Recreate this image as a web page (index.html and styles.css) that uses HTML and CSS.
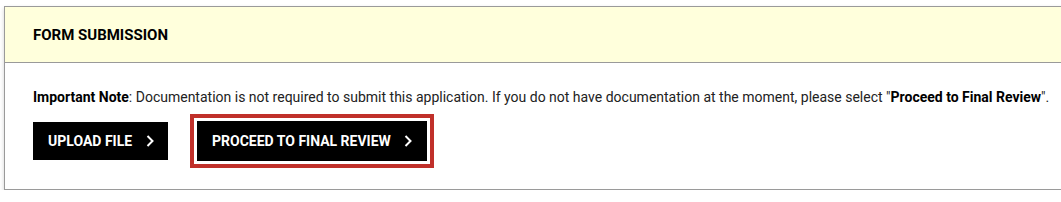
FILE: index.html
```html
<!DOCTYPE html>
<html lang="en">
  <head>
    <meta charset="UTF-8" />
    <meta name="viewport" content="width=device-width, initial-scale=1.0" />
    <title>Form Submission</title>
    <link rel="stylesheet" href="styles.css">
  </head>
  <body>
    <div class="panel">
      <div class="panelHeader">
        <h4 class="panelTitle">FORM SUBMISSION</h4>
      </div>
      <div class="panelBody">
        <p class="note">
          <strong>Important Note</strong>: Documentation is not required to submit this application. If you do not have documentation at the moment, please select "<strong>Proceed to Final Review</strong>".
        </p>
        <div class="actions">
          <button class="btn upload" type="button">
            UPLOAD FILE
            <svg class="chev" width="8" height="12" viewBox="0 0 8 12"><polyline points="1.5,1 6.5,6 1.5,11" /></svg>
          </button>
          <button class="btn proceed" type="button">
            PROCEED TO FINAL REVIEW
            <svg class="chev" width="8" height="12" viewBox="0 0 8 12"><polyline points="1.5,1 6.5,6 1.5,11" /></svg>
          </button>
        </div>
      </div>
    </div>
  </body>
</html>
```

FILE: styles.css
```css
body {
  margin: 0;
  overflow: hidden;
  font-family: Roboto, "Liberation Sans", sans-serif;
  color: #111;
  background: #fff;
}
.panel {
  margin: 6px -20px 0 4px;
  border: 1px solid #9a9a9a;
  box-shadow: 0 2px 4px rgba(0, 0, 0, 0.18);
  background: #fff;
}
.panelHeader {
  height: 55px;
  display: flex;
  align-items: center;
  padding: 0 28px;
  background: #ffffdc;
  border-bottom: 1px solid #9a9a9a;
}
.panelTitle {
  margin: 0;
  font-size: 15px;
  font-weight: 700;
  color: #000;
}
.panelBody {
  padding: 24px 28px 28px;
}
.note {
  margin: 0;
  font-size: 14px;
  line-height: 20px;
  color: #222;
}
.note strong {
  color: #000;
}
.actions {
  display: flex;
  align-items: center;
  gap: 29px;
  margin-top: 14px;
}
.btn {
  display: inline-flex;
  align-items: center;
  border: none;
  background: #000;
  color: #fff;
  font-family: Roboto, "Liberation Sans", sans-serif;
  font-size: 14px;
  font-weight: 700;
  padding: 0;
  cursor: pointer;
}
.upload {
  height: 38px;
  width: 135px;
  padding-left: 15px;
  gap: 14px;
}
.proceed {
  height: 40px;
  width: 230px;
  padding-left: 15px;
  gap: 13px;
  box-shadow: 0 0 0 3px #fff, 0 0 0 7px #c0302a;
}
.chev polyline {
  fill: none;
  stroke: #fff;
  stroke-width: 2;
}
```
